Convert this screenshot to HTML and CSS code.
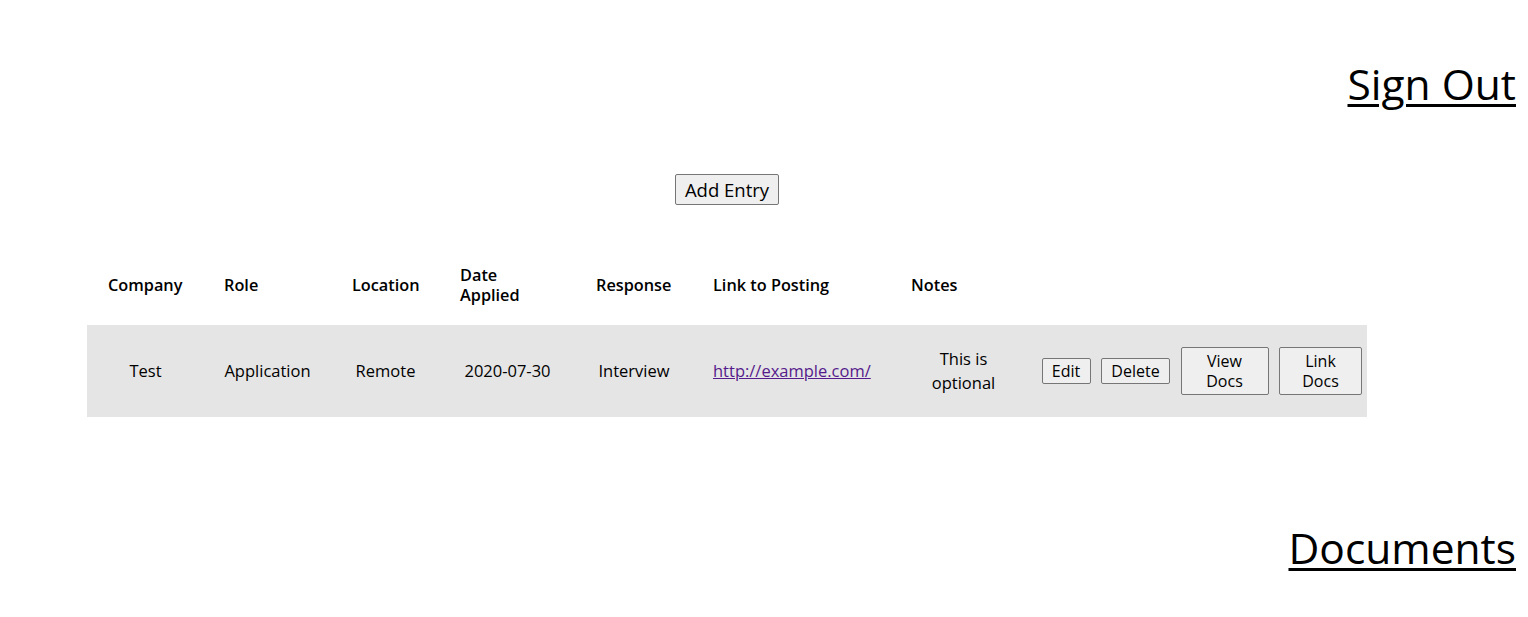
FILE: index.html
```html
<!DOCTYPE html>
<html lang="en">
<head>
<meta charset="utf-8">
<title>Applications</title>
<link rel="stylesheet" href="styles.css">
</head>
<body>
<header class="topbar"><a class="big-link" href="#">Sign Out</a></header>
<main class="content">
  <div class="actions"><button class="btn add-btn" type="button">Add Entry</button></div>
  <table class="entries">
    <colgroup>
      <col class="c-company"><col class="c-role"><col class="c-location"><col class="c-date"><col class="c-response"><col class="c-link"><col class="c-notes"><col class="c-edit"><col class="c-delete"><col class="c-view"><col class="c-linkdocs">
    </colgroup>
    <thead>
      <tr class="head-row">
        <th>Company</th><th>Role</th><th>Location</th><th>Date Applied</th><th>Response</th><th>Link to Posting</th><th>Notes</th><th class="btn-cell"></th><th class="btn-cell"></th><th class="btn-cell"></th><th class="btn-cell"></th>
      </tr>
    </thead>
    <tbody>
      <tr class="data-row">
        <td>Test</td>
        <td>Application</td>
        <td>Remote</td>
        <td>2020-07-30</td>
        <td>Interview</td>
        <td><a class="post-link" href="#">http://example.com/</a></td>
        <td>This is optional</td>
        <td class="btn-cell"><button class="btn row-btn w-edit" type="button">Edit</button></td>
        <td class="btn-cell"><button class="btn row-btn w-delete" type="button">Delete</button></td>
        <td class="btn-cell"><button class="btn row-btn w-view" type="button">View Docs</button></td>
        <td class="btn-cell"><button class="btn row-btn w-linkdocs" type="button">Link Docs</button></td>
      </tr>
    </tbody>
  </table>
</main>
<footer class="docs-bar"><a class="big-link" href="#">Documents</a></footer>
</body>
</html>
```
FILE: styles.css
```css
html, body {
  margin: 0;
  padding: 0;
  background: #ffffff;
  color: #000000;
  font-family: "Open Sans", "Noto Sans", sans-serif;
}

.topbar {
  display: flex;
  justify-content: flex-end;
  padding: 55px 12px 0 0;
}

.docs-bar {
  display: flex;
  justify-content: flex-end;
  padding: 0 12px 0 0;
  margin-top: 102px;
}

.big-link {
  font-size: 42.5px;
  line-height: 58px;
  color: #000000;
  text-decoration: underline;
  text-decoration-thickness: 3px;
  text-underline-offset: 4px;
}

.content {
  width: 1280px;
  margin-left: 87px;
}

.actions {
  display: flex;
  justify-content: center;
  margin-top: 61px;
}

.btn {
  font-family: "Open Sans", "Noto Sans", sans-serif;
  color: #000000;
  background: #efefef;
  border: 1px solid #767676;
  border-radius: 2px;
  margin: 0;
}

.add-btn {
  font-size: 18.5px;
  line-height: 27px;
  padding: 1px 9px;
  height: 31px;
  white-space: nowrap;
}

.entries {
  margin-top: 40px;
  width: 1280px;
  table-layout: fixed;
  border-collapse: collapse;
}

.c-company { width: 116px; }
.c-role { width: 128px; }
.c-location { width: 108px; }
.c-date { width: 136px; }
.c-response { width: 117px; }
.c-link { width: 198px; }
.c-notes { width: 146px; }
.c-edit { width: 60px; }
.c-delete { width: 79px; }
.c-view { width: 99px; }
.c-linkdocs { width: 93px; }

.entries th {
  height: 80px;
  padding: 0 20px 0 21px;
  text-align: left;
  vertical-align: middle;
  font-size: 16.3px;
  font-weight: 600;
  line-height: 20px;
}

.data-row {
  background: #e5e5e5;
}

.entries td {
  height: 92px;
  padding: 0 20px 0 21px;
  text-align: center;
  vertical-align: middle;
  font-size: 16.5px;
  line-height: 24px;
}

.entries .btn-cell {
  padding: 0 5px;
  text-align: center;
}

.post-link {
  color: #551a8b;
  text-decoration: underline;
}

.row-btn {
  font-size: 16px;
  line-height: 20px;
  padding: 2px 0;
  vertical-align: middle;
}

.w-edit { width: 49px; }
.w-delete { width: 69px; }
.w-view { width: 88px; padding: 3px 10px; }
.w-linkdocs { width: 83px; padding: 3px 10px; }
```
